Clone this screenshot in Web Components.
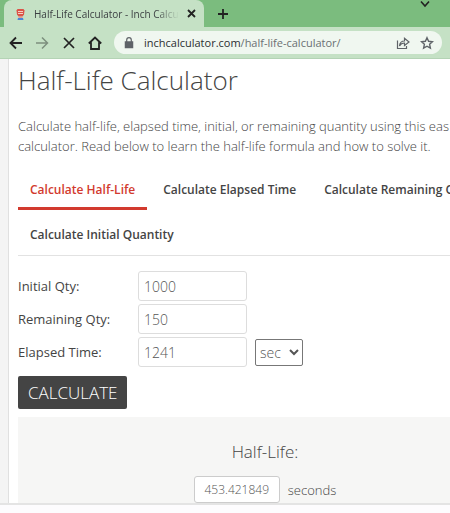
<!DOCTYPE html>
<html lang="en">
<head>
<meta charset="utf-8">
<meta name="viewport" content="width=device-width, initial-scale=1">
<title>Half-Life Calculator - Inch Calculator</title>
<style>
  body {
    margin: 0;
    font-family: "Open Sans", "Noto Sans", sans-serif;
    font-size: 13px;
    color: #444;
    background: #fdfcfe;
    overflow: hidden;
  }
</style>
</head>
<body>
<browser-bar heading="Half-Life Calculator - Inch Calcula" host="inchcalculator.com" path="/half-life-calculator/"></browser-bar>
<page-view>
  <page-intro>
    <span slot="title">Half-Life Calculator</span>
    Calculate half-life, elapsed time, initial, or remaining quantity using this eas<br>
    calculator. Read below to learn the half-life formula and how to solve it.
  </page-intro>
  <tab-list>
    <tab-link active>Calculate Half-Life</tab-link>
    <tab-link>Calculate Elapsed Time</tab-link>
    <tab-link>Calculate Remaining Q</tab-link>
    <tab-link slot="second">Calculate Initial Quantity</tab-link>
  </tab-list>
  <calc-form></calc-form>
  <calc-result value="453.421849" unit="seconds">Half-Life:</calc-result>
</page-view>

<script>
class BrowserBar extends HTMLElement {
  constructor() {
    super();
    this.shadowDOM = this.attachShadow({ mode: "open" });
  }

  connectedCallback() {
    this.render();
  }

  render() {
    this.shadowDOM.innerHTML = `
      <style>
        :host {
          display: block;
          color: #3c4043;
          font-size: 11px;
        }
        button {
          display: flex;
          padding: 0;
          border: 0;
          background: none;
          color: #222;
        }
        svg {
          display: block;
          fill: none;
          stroke: currentColor;
        }
        .strip {
          display: flex;
          align-items: center;
          height: 27px;
          padding: 0 20px 0 4px;
          background: #7bbc7e;
        }
        .tab {
          display: flex;
          align-items: center;
          gap: 8px;
          box-sizing: border-box;
          width: 200px;
          height: 27px;
          padding: 0 8px 0 10px;
          border-radius: 8px 8px 0 0;
          background: #c5e1c5;
        }
        .tab span {
          flex: 1;
          overflow: hidden;
          white-space: nowrap;
          font-size: 10px;
          -webkit-mask-image: linear-gradient(90deg, #000 84%, transparent);
          mask-image: linear-gradient(90deg, #000 84%, transparent);
        }
        .favicon {
          stroke: none;
        }
        .plus {
          margin-left: 13px;
        }
        .chevron {
          margin-left: auto;
          align-self: flex-start;
        }
        .tools {
          display: flex;
          align-items: center;
          gap: 12px;
          height: 31px;
          padding: 0 8px;
          background: #c5e1c5;
          border-bottom: 1px solid #b4d3b5;
        }
        .address {
          display: flex;
          flex: 1;
          align-items: center;
          gap: 10px;
          height: 23px;
          padding: 0 8px 0 10px;
          border-radius: 12px;
          background: #f0f7f0;
          white-space: nowrap;
        }
        .url {
          flex: 1;
          color: #6b7073;
        }
        b {
          font-weight: 400;
          color: #2b2e30;
        }
        .muted {
          color: #7d8f7e;
        }
        .grey {
          color: #5f6368;
        }
      </style>
      <div class="strip">
        <div class="tab">
          <svg class="favicon" width="12" height="14" viewBox="0 0 12 14">
            <path d="M3.500 2h6l1 1.500-.5 4L8.500 9.500h-4L3 7.500l-.5-4z" fill="#dc5348"/>
            <path d="M4 4h5v1H4zM4 6h5v1H4z" fill="#f3d3c4"/>
            <path d="M4.500 9.500h4V11h-4z" fill="#e79a8e"/>
            <path d="M4 11h5l.5 2h-6z" fill="#4a86d8"/>
          </svg>
          <span>${this.getAttribute("heading")}</span>
          <button aria-label="Close tab">
            <svg width="9" height="9" viewBox="0 0 9 9" stroke-width="1.800"><path d="M1 1l7 7M8 1L1 8"/></svg>
          </button>
        </div>
        <button class="plus" aria-label="New tab">
          <svg width="12" height="12" viewBox="0 0 12 12" stroke-width="1.800"><path d="M6 1v10M1 6h10"/></svg>
        </button>
        <button class="chevron" aria-label="Search tabs">
          <svg width="10" height="8" viewBox="0 0 10 8" stroke-width="1.600"><path d="M1 1.500l4 4.500 4-4.500"/></svg>
        </button>
      </div>
      <div class="tools">
        <button aria-label="Back">
          <svg width="15" height="14" viewBox="0 0 15 14" stroke-width="1.800"><path d="M14 7H3M8 1.500L2.500 7 8 12.500"/></svg>
        </button>
        <button class="muted" aria-label="Forward">
          <svg width="15" height="14" viewBox="0 0 15 14" stroke-width="1.500"><path d="M1 7h11M7 1.500L12.500 7 7 12.500"/></svg>
        </button>
        <button aria-label="Stop loading">
          <svg width="14" height="14" viewBox="0 0 14 14" stroke-width="1.700"><path d="M2 2l10 10M12 2L2 12"/></svg>
        </button>
        <button aria-label="Home">
          <svg width="14" height="14" viewBox="0 0 14 14" stroke-width="1.800"><path d="M.8 7.500L7 1.500l6.200 6M3 6.200V13h8V6.200"/></svg>
        </button>
        <div class="address">
          <svg class="grey" width="10" height="12" viewBox="0 0 10 12"><path d="M1.500 5h7v5.500h-7z" fill="currentColor" stroke-width="1.500"/><path d="M2.700 5V3a2.300 2.300 0 0 1 4.600 0v2" stroke-width="1.200"/></svg>
          <span class="url"><b>${this.getAttribute("host")}</b>${this.getAttribute("path")}</span>
          <button class="grey" aria-label="Share">
            <svg width="14" height="14" viewBox="0 0 14 14" stroke-width="1.200"><path d="M1.500 4.500V12.500h9V10M3.500 10c.3-3.500 2-5 5-5V2.300L13 6 8.500 9.500V7C6 7 4.500 8 3.500 10z"/></svg>
          </button>
          <button class="grey" aria-label="Bookmark">
            <svg width="14" height="14" viewBox="0 0 14 14" stroke-width="1.400"><path d="M7 1.700l1.600 3.600 3.900.4-2.900 2.600.8 3.900L7 10.200l-3.400 2 .8-3.900-2.900-2.600 3.900-.4z"/></svg>
          </button>
        </div>
      </div>
    `;
  }
}

class PageView extends HTMLElement {
  constructor() {
    super();
    this.shadowDOM = this.attachShadow({ mode: "open" });
    this.shadowDOM.innerHTML = `
      <style>
        :host {
          display: grid;
          grid-template-columns: 8px minmax(0, 1fr);
          background: #f4f4f4;
          border-bottom: 2px solid #e4e4e4;
        }
        main {
          grid-column: 2;
          padding-left: 9px;
          border-left: 1px solid #e0e0e0;
          background: #fff;
          overflow: hidden;
        }
      </style>
      <main><slot></slot></main>
    `;
  }
}

class PageIntro extends HTMLElement {
  constructor() {
    super();
    this.shadowDOM = this.attachShadow({ mode: "open" });
    this.shadowDOM.innerHTML = `
      <style>
        :host {
          display: block;
          font-weight: 300;
        }
        h1 {
          margin: 0;
          padding: 2px 0 17px;
          font-size: 26px;
          font-weight: 300;
          line-height: 38px;
        }
        p {
          margin: 0;
          line-height: 20px;
          white-space: nowrap;
        }
      </style>
      <h1><slot name="title"></slot></h1>
      <p><slot></slot></p>
    `;
  }
}

class TabLink extends HTMLElement {
  constructor() {
    super();
    this.shadowDOM = this.attachShadow({ mode: "open" });
    this.shadowDOM.innerHTML = `
      <style>
        :host {
          display: block;
        }
        a {
          display: block;
          padding: 8px 12px 0;
          border-bottom: 3px solid transparent;
          color: #444;
          font-size: 12px;
          font-weight: 600;
          line-height: 34px;
          text-decoration: none;
          white-space: nowrap;
        }
        :host([active]) a {
          color: #d23a2e;
          border-bottom-color: #d23a2e;
        }
      </style>
      <a href="#"><slot></slot></a>
    `;
  }
}

class TabList extends HTMLElement {
  constructor() {
    super();
    this.shadowDOM = this.attachShadow({ mode: "open" });
    this.shadowDOM.innerHTML = `
      <style>
        :host {
          display: block;
          margin-top: 9px;
          border-bottom: 1px solid #e2e2e2;
        }
        nav {
          display: flex;
          gap: 4px;
        }
      </style>
      <nav><slot></slot></nav>
      <nav><slot name="second"></slot></nav>
    `;
  }
}

class CalcForm extends HTMLElement {
  constructor() {
    super();
    this.shadowDOM = this.attachShadow({ mode: "open" });
  }

  connectedCallback() {
    this.render();
  }

  render() {
    this.shadowDOM.innerHTML = `
      <style>
        :host {
          display: block;
          padding: 15px 0 8px;
        }
        form {
          display: grid;
          grid-template-columns: 112px 109px 48px;
          gap: 3px 8px;
          align-items: center;
        }
        label {
          grid-column: 1;
        }
        input, select {
          box-sizing: border-box;
          width: 100%;
          font-family: inherit;
          font-size: 14px;
          font-weight: 300;
          color: #555;
          background: #fff;
        }
        input {
          height: 30px;
          padding: 0 5px;
          border: 1px solid #ddd;
          border-radius: 3px;
        }
        select {
          height: 27px;
          padding: 0;
          border: 1px solid #777;
          border-radius: 2px;
        }
        button {
          grid-column: 1;
          justify-self: start;
          height: 33px;
          margin-top: 6px;
          padding: 0 10px;
          border: 0;
          border-radius: 2px;
          background: #444;
          color: #fff;
          font-family: inherit;
          font-size: 17px;
          font-weight: 300;
        }
      </style>
      <form>
        <label for="initial">Initial Qty:</label>
        <input id="initial" type="text" value="1000">
        <label for="remaining">Remaining Qty:</label>
        <input id="remaining" type="text" value="150">
        <label for="elapsed">Elapsed Time:</label>
        <input id="elapsed" type="text" value="1241">
        <select aria-label="Time unit"><option>sec</option></select>
        <button type="button">CALCULATE</button>
      </form>
    `;
  }
}

class CalcResult extends HTMLElement {
  constructor() {
    super();
    this.shadowDOM = this.attachShadow({ mode: "open" });
  }

  connectedCallback() {
    this.render();
  }

  render() {
    this.shadowDOM.innerHTML = `
      <style>
        :host {
          display: flex;
          flex-direction: column;
          align-items: center;
          gap: 12px;
          padding: 23px 0 0 62px;
          background: #f6f6f5;
          font-weight: 300;
        }
        label {
          font-size: 17px;
          line-height: 24px;
        }
        div {
          display: flex;
          align-items: center;
          gap: 8px;
        }
        input {
          box-sizing: border-box;
          width: 86px;
          height: 27px;
          padding: 0;
          border: 1px solid #ccc;
          border-radius: 3px;
          background: #fff;
          color: #555;
          font: inherit;
          font-size: 12px;
          text-align: center;
        }
      </style>
      <label for="result"><slot></slot></label>
      <div>
        <input id="result" type="text" value="${this.getAttribute("value")}" readonly>
        <span>${this.getAttribute("unit")}</span>
      </div>
    `;
  }
}

customElements.define("browser-bar", BrowserBar);
customElements.define("page-view", PageView);
customElements.define("page-intro", PageIntro);
customElements.define("tab-link", TabLink);
customElements.define("tab-list", TabList);
customElements.define("calc-form", CalcForm);
customElements.define("calc-result", CalcResult);
</script>
</body>
</html>
